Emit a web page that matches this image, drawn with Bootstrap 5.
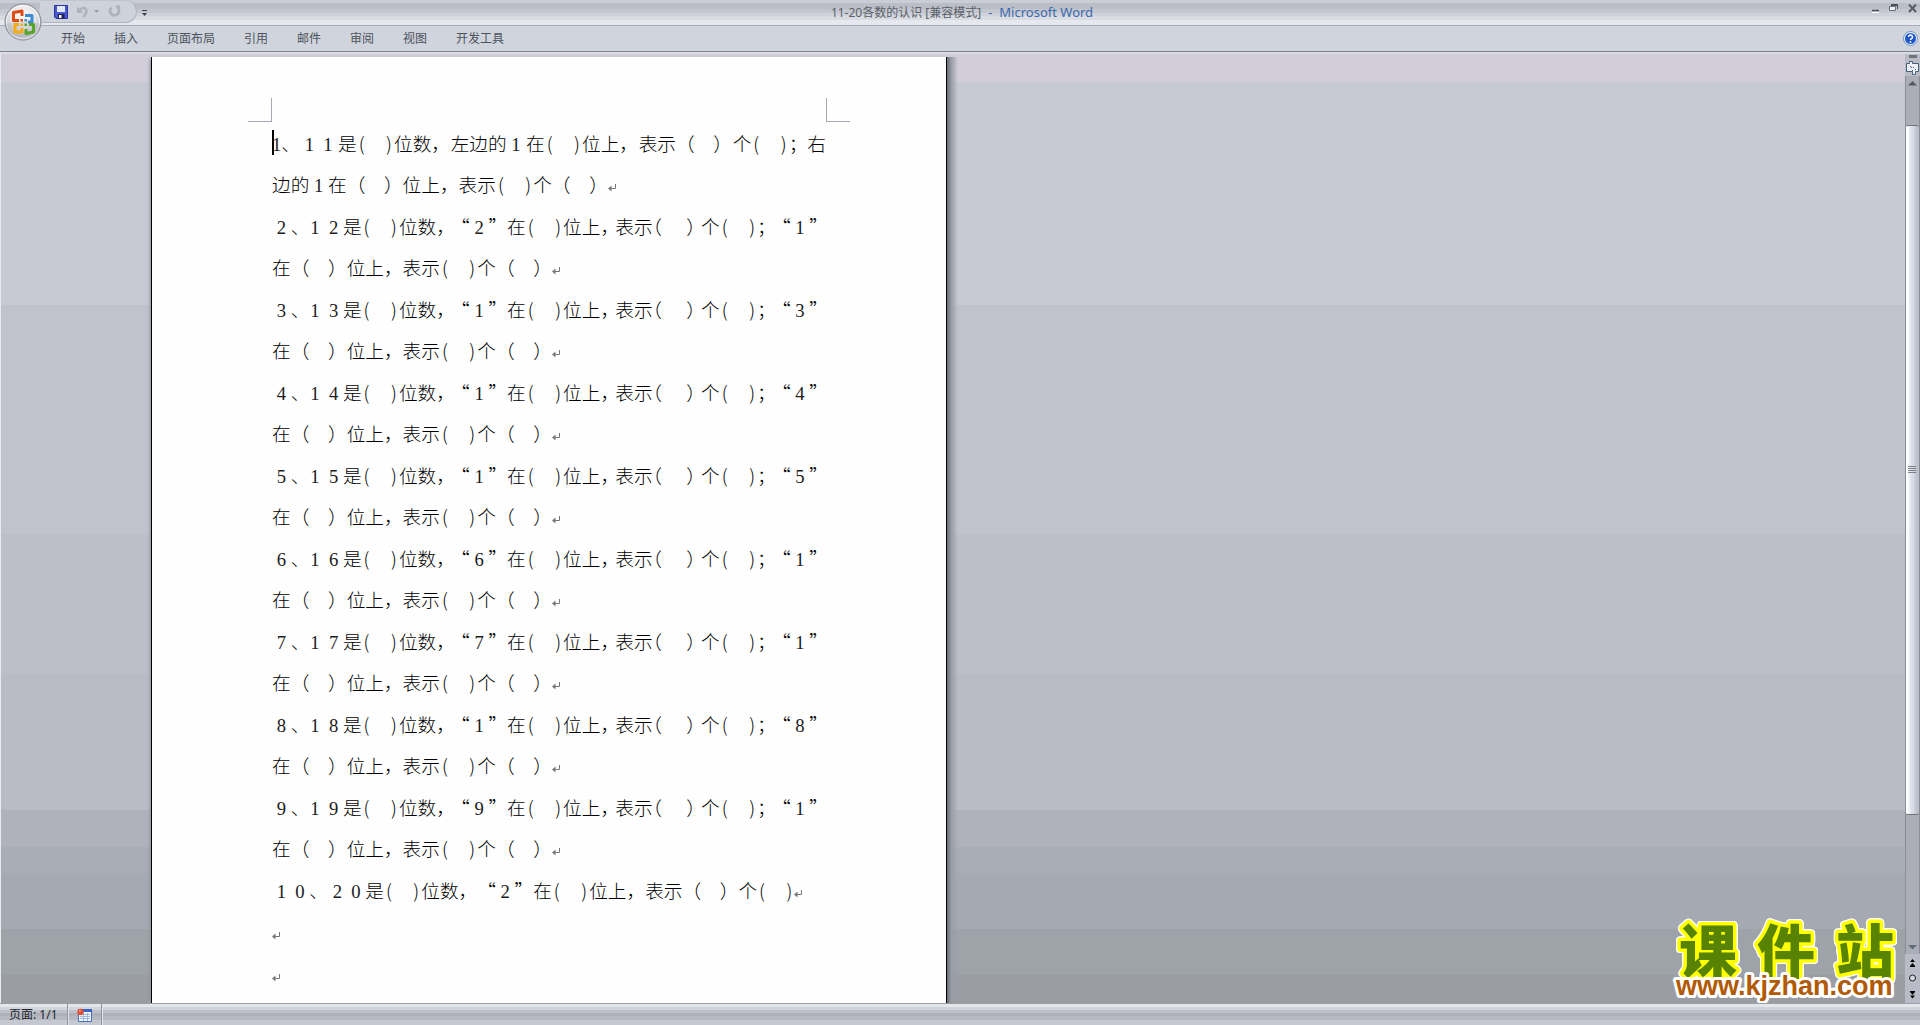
<!DOCTYPE html>
<html lang="zh-CN">
<head>
<meta charset="utf-8">
<meta name="viewport" content="width=device-width, initial-scale=1">
<title>11-20各数的认识 [兼容模式] - Microsoft Word</title>
<link href="https://cdn.jsdelivr.net/npm/bootstrap@5.3.0/dist/css/bootstrap.min.css" rel="stylesheet">
<style>
body{font-family:"Noto Sans","Noto Sans CJK SC",sans-serif;font-size:12px;line-height:16px;color:#4c535c;background:#d0d4dd;overflow:hidden}
button{border:0;background:none;padding:0;line-height:0;color:inherit}
svg{display:block}
/* title bar */
.titlebar{height:26px;border-bottom:1px solid #a9adb8;background:linear-gradient(#c9cdd6 0 3px,#bbbec7 3px 9px,#c4c7d0 9px 13px,#cfd2da 13px 16px,#dadce3 16px 20px,#e6e8ef 20px)}
.doc-title{color:#5a5f68}
.app-name{color:#3b69ad;font-size:13px}
.quick{height:23px;padding:0 15px 0 14px;margin-left:40px;border:1px solid #b1b5bf;border-top-color:#c2c5ce;border-left:0;border-radius:0 12px 12px 0;background:#ced2da}
.orb{left:4px;top:3px;z-index:3}
.win-buttons{padding:4px 3px 0 0;gap:10px}
/* ribbon tabs */
.ribbon{height:26px;border-bottom:1px solid #7d828c;background:#d0d4dd;padding:0 2px 0 61px}
.ribbon-tabs{gap:29px}
.ribbon-tabs a{color:#4c535c;text-decoration:none}
/* work area */
.workspace{min-height:0;border-top:2px solid #d9dde5;border-left:1px solid #e8eaef;background:linear-gradient(#d1cdd9 0 3%,#c7cad2 3% 26.4%,#c0c3cc 26.4% 50.6%,#bcbfc8 50.6% 65.3%,#b9bcc5 65.3% 79.7%,#afb2bb 79.7% 83.6%,#a9adb5 83.6% 86.3%,#a5a9b1 86.3% 92.2%,#9ea2a9 92.2% 97%,#9a9ea4 97%)}
.sheet{width:796px;margin:3px 0 0 150px;background:#fefefe;border:solid #000;border-width:0 1px;padding:41px 96px 0;box-shadow:-3px 0 3px -2px #8d9098}
.shade{width:11px;margin-top:3px;background:linear-gradient(90deg,#6b6d73,#9a9da5 40%,#c0c3cb00)}
.crop-mark{width:24px;height:24px;border:0 solid #a4a8b2;border-bottom-width:1px}
.crop-mark.at-left{border-right-width:1px}
.crop-mark.at-right{border-left-width:1px}
.doc-text{margin:0 24px;font-family:"Noto Sans CJK SC",sans-serif;font-weight:300;font-size:14pt;line-height:41px;color:#000;text-spacing-trim:space-all;font-kerning:none}
.doc-text p{margin:0 0 1px;white-space:nowrap}
.doc-text .ln{display:block;height:41px}
.doc-text .spread{display:flex;justify-content:space-between}
/* serif digits, full and half width */
.doc-text i{font-style:normal;font-weight:400;color:#1c1c1c;font-family:"Liberation Serif",serif;display:inline-block;width:1em;text-align:center}
.doc-text i.half{width:.5em}
/* half-width bracket pair around a blank */
.doc-text b{font-weight:300;display:inline-flex;width:2em;justify-content:space-between;padding:0 2px}
/* punctuation set tight */
.doc-text u{text-decoration:none;display:inline-block;width:.8em;font-feature-settings:"halt"}
.ret{display:inline-block;vertical-align:baseline}
.caret{left:0;top:8px;width:2px;height:25px;background:#000}
/* scroll bar */
.scroll{width:15px;background:#b9bbc6}
.split{width:8px;height:3px;margin:1px 0 2px 4px;background:#6f7278}
.track{background:#abaeb7;border-left:1px solid #8b8e96;border-right:1px solid #8b8e96}
.thumb{flex:690 1 0;border:1px solid #70737c;border-left:0;border-right:0;border-radius:2px;background:linear-gradient(90deg,#fff 0 2px,#e4e7f0 4px,#d8dbe5 7px,#bcc0ca 11px)}
.above-thumb{flex:33 1 0}
.below-thumb{flex:123 1 0}
/* status bar */
.status{height:22px;border-top:1px solid #9a9ea7;color:#22262c;background:linear-gradient(#e3e6eb 0 3px,#d0d4db 3px 6px,#bec1ca 6px 9px,#aeb1ba 9px 12px,#b6b9c2 12px 16px,#c5c8d0 16px)}
.status-cell{border-right:1px solid #8f939c;box-shadow:1px 0 #e2e4ea;padding:0 9px}
/* watermark */
.brand{right:18px;bottom:0}
.brand-cn{font:900 58px "Noto Sans CJK SC",sans-serif;fill:#588300;stroke:#ff0;stroke-width:7px;stroke-linejoin:round;paint-order:stroke;filter:drop-shadow(1px 0 #fff) drop-shadow(-1px 0 #fff) drop-shadow(0 1px #fff) drop-shadow(0 -1px #fff)}
.brand-url{font:700 27px "Liberation Sans",sans-serif;fill:#b15a05;stroke:#fff;stroke-width:6px;stroke-linejoin:round;paint-order:stroke}
</style>
<script src="https://cdn.jsdelivr.net/npm/bootstrap@5.3.0/dist/js/bootstrap.bundle.min.js"></script>
</head>
<body>
<svg width="0" height="0" class="position-absolute" aria-hidden="true">
  <symbol id="ret" viewBox="0 0 8 8"><path d="M7.500 0v4.500H2" fill="none" stroke="#777"/><path d="M0 4.500L3.500 1.500v6z" fill="#777"/></symbol>
</svg>
<div class="d-flex flex-column vh-100 position-relative">
  <button class="orb position-absolute" aria-label="Office">
    <svg width="38" height="38" viewBox="0 0 38 38">
      <defs><radialGradient id="og" cx=".5" cy=".35" r=".65"><stop offset="0" stop-color="#fff"/><stop offset=".55" stop-color="#e3e4e8"/><stop offset=".85" stop-color="#b9bbc2"/><stop offset="1" stop-color="#f4f5f7"/></radialGradient></defs>
      <circle cx="19" cy="19" r="18" fill="url(#og)" stroke="#84878f"/>
      <circle cx="19" cy="19" r="16.500" fill="none" stroke="#fff" stroke-opacity=".8"/>
      <path d="M2.500 21Q19 14 35.500 21A16.500 16.500 0 0 1 2.500 21z" fill="#a9acb4" opacity=".3"/>
      <g fill="none" stroke-width="3" stroke-linejoin="round">
        <path d="M15 17.500H9.500V9.500L18 8v5" stroke="#dd4a12"/>
        <path d="M21 12.500h7V19h-4" stroke="#3c8cd4"/>
        <path d="M15 21.500h-4V29H18v-4" stroke="#f5ac14"/>
        <path d="M25 21.500h4.500V29L22 30.500V26" stroke="#58a52c"/>
      </g>
      <rect x="16.500" y="16" width="2.500" height="2.500" fill="#dd4a12"/><rect x="20.500" y="16" width="2.500" height="2.500" fill="#3c8cd4"/><rect x="16.500" y="20.500" width="2.500" height="2.500" fill="#f5ac14"/><rect x="20.500" y="20.500" width="2.500" height="2.500" fill="#58a52c"/>
    </svg>
  </button>
  <header class="titlebar d-flex position-relative flex-shrink-0">
    <div class="quick d-flex align-items-center">
      <button aria-label="保存"><svg width="14" height="14"><path d="M.5.500h13v13H2L.5 12z" fill="#4a58cf" stroke="#2c339b"/><path d="M3 1h8v6H3z" fill="#dfe9f8"/><path d="M4 9h6.500v4.500H4z" fill="#1b1f52"/><path d="M5 10h2.500v3H5z" fill="#fff"/></svg></button>
      <button class="ms-2" aria-label="撤消"><svg width="13" height="13" viewBox="0 0 13 13"><path d="M2.500 6.500C5 2.500 10.500 1.500 10.500 6c0 2.500-1.500 4-3 6" fill="none" stroke="#aeb2bc" stroke-width="2.600"/><path d="M1 1.500V8h6.500z" fill="#aeb2bc"/></svg></button>
      <button class="ms-1" aria-label="撤消列表"><svg width="7" height="4"><path d="M1 0h5L3.500 3z" fill="#9a9ea8"/></svg></button>
      <button class="ms-2" aria-label="恢复"><svg width="13" height="13" viewBox="0 0 13 13"><path d="M3.500 2.500a4.500 4.500 0 1 0 6 0" fill="none" stroke="#aeb2bc" stroke-width="2.800"/><path d="M6.500.500H12V6z" fill="#aeb2bc"/></svg></button>
    </div>
    <button class="ms-1" aria-label="自定义快速访问工具栏"><svg width="7" height="8"><path d="M1 1.500h5" stroke="#3c4047"/><path d="M1 4h5L3.500 7z" fill="#3c4047"/></svg></button>
    <div class="doc-title position-absolute start-50 translate-middle-x text-nowrap mt-1 ps-1">11-20各数的认识 [兼容模式] <span class="app-name ms-1">-&nbsp; Microsoft Word</span></div>
    <div class="win-buttons d-flex align-items-start ms-auto">
      <button aria-label="最小化"><svg width="8" height="9"><path d="M1 6.500h7" stroke="#4a4e57" stroke-width="1.500"/><path d="M1 8.500h7" stroke="#fff"/></svg></button>
      <button aria-label="向下还原"><svg width="9" height="8"><path d="M2 .500h6.500V5" fill="none" stroke="#4a4e57"/><path d="M.5 2.500h6v4h-6z" fill="#eceff5" stroke="#68707f"/><path d="M2 1h6.500" stroke="#4a4e57" stroke-width="2"/></svg></button>
      <button aria-label="关闭"><svg width="9" height="9"><path d="M1 .500l7 7.500M8 .500L1 8" stroke="#585c66" stroke-width="2"/></svg></button>
    </div>
  </header>
  <nav class="ribbon d-flex align-items-center justify-content-between flex-shrink-0">
    <div class="ribbon-tabs d-flex">
      <a href="#">开始</a><a href="#">插入</a><a href="#">页面布局</a><a href="#">引用</a><a href="#">邮件</a><a href="#">审阅</a><a href="#">视图</a><a href="#">开发工具</a>
    </div>
    <button aria-label="帮助"><svg width="15" height="15" viewBox="0 0 15 15"><circle cx="7.500" cy="7.500" r="7" fill="#e9f1fb" stroke="#6f94c4"/><circle cx="7.500" cy="7.500" r="5.500" fill="#1f55c8"/><path d="M5.500 6a2 2 0 1 1 3 1.700q-1 .5-1 1.300" fill="none" stroke="#fff" stroke-width="1.500"/><circle cx="7.500" cy="11" r=".9" fill="#fff"/></svg></button>
  </nav>
  <div class="workspace d-flex flex-fill overflow-hidden position-relative">
    <main class="sheet flex-shrink-0" id="sheet">
      <div class="d-flex justify-content-between"><div class="crop-mark at-left"></div><div class="crop-mark at-right"></div></div>
      <div class="doc-text position-relative">
        <div class="caret position-absolute"></div>
        <p><span class="ln spread"><span><i class="half">1</i>、<i>1</i><i>1</i></span><span>是<b>(<em>&nbsp; </em>)</b>位数，</span><span>左边的<i>1</i></span><span>在<b>(<em>&nbsp; </em>)</b>位上，</span><span>表示（　）</span><span>个<b>(<em>&nbsp; </em>)</b>；右</span></span><span class="ln">边的<i>1</i>在（　）位上，表示<b>(<em>&nbsp; </em>)</b>个（　）<svg class="ret" width="8" height="8"><use href="#ret"/></svg></span></p>
        <p><span class="ln"><i>2</i><u>、</u><i>1</i><i>2</i>是<b>(<em>&nbsp; </em>)</b>位数<u>，</u>“<i>2</i>”在<b>(<em>&nbsp; </em>)</b>位上<u>，</u>表示<u>（</u>　<u>）</u>个<b>(<em>&nbsp; </em>)</b><u>；</u>“<i>1</i>”</span><span class="ln">在（　）位上，表示<b>(<em>&nbsp; </em>)</b>个（　）<svg class="ret" width="8" height="8"><use href="#ret"/></svg></span></p>
        <p><span class="ln"><i>3</i><u>、</u><i>1</i><i>3</i>是<b>(<em>&nbsp; </em>)</b>位数<u>，</u>“<i>1</i>”在<b>(<em>&nbsp; </em>)</b>位上<u>，</u>表示<u>（</u>　<u>）</u>个<b>(<em>&nbsp; </em>)</b><u>；</u>“<i>3</i>”</span><span class="ln">在（　）位上，表示<b>(<em>&nbsp; </em>)</b>个（　）<svg class="ret" width="8" height="8"><use href="#ret"/></svg></span></p>
        <p><span class="ln"><i>4</i><u>、</u><i>1</i><i>4</i>是<b>(<em>&nbsp; </em>)</b>位数<u>，</u>“<i>1</i>”在<b>(<em>&nbsp; </em>)</b>位上<u>，</u>表示<u>（</u>　<u>）</u>个<b>(<em>&nbsp; </em>)</b><u>；</u>“<i>4</i>”</span><span class="ln">在（　）位上，表示<b>(<em>&nbsp; </em>)</b>个（　）<svg class="ret" width="8" height="8"><use href="#ret"/></svg></span></p>
        <p><span class="ln"><i>5</i><u>、</u><i>1</i><i>5</i>是<b>(<em>&nbsp; </em>)</b>位数<u>，</u>“<i>1</i>”在<b>(<em>&nbsp; </em>)</b>位上<u>，</u>表示<u>（</u>　<u>）</u>个<b>(<em>&nbsp; </em>)</b><u>；</u>“<i>5</i>”</span><span class="ln">在（　）位上，表示<b>(<em>&nbsp; </em>)</b>个（　）<svg class="ret" width="8" height="8"><use href="#ret"/></svg></span></p>
        <p><span class="ln"><i>6</i><u>、</u><i>1</i><i>6</i>是<b>(<em>&nbsp; </em>)</b>位数<u>，</u>“<i>6</i>”在<b>(<em>&nbsp; </em>)</b>位上<u>，</u>表示<u>（</u>　<u>）</u>个<b>(<em>&nbsp; </em>)</b><u>；</u>“<i>1</i>”</span><span class="ln">在（　）位上，表示<b>(<em>&nbsp; </em>)</b>个（　）<svg class="ret" width="8" height="8"><use href="#ret"/></svg></span></p>
        <p><span class="ln"><i>7</i><u>、</u><i>1</i><i>7</i>是<b>(<em>&nbsp; </em>)</b>位数<u>，</u>“<i>7</i>”在<b>(<em>&nbsp; </em>)</b>位上<u>，</u>表示<u>（</u>　<u>）</u>个<b>(<em>&nbsp; </em>)</b><u>；</u>“<i>1</i>”</span><span class="ln">在（　）位上，表示<b>(<em>&nbsp; </em>)</b>个（　）<svg class="ret" width="8" height="8"><use href="#ret"/></svg></span></p>
        <p><span class="ln"><i>8</i><u>、</u><i>1</i><i>8</i>是<b>(<em>&nbsp; </em>)</b>位数<u>，</u>“<i>1</i>”在<b>(<em>&nbsp; </em>)</b>位上<u>，</u>表示<u>（</u>　<u>）</u>个<b>(<em>&nbsp; </em>)</b><u>；</u>“<i>8</i>”</span><span class="ln">在（　）位上，表示<b>(<em>&nbsp; </em>)</b>个（　）<svg class="ret" width="8" height="8"><use href="#ret"/></svg></span></p>
        <p><span class="ln"><i>9</i><u>、</u><i>1</i><i>9</i>是<b>(<em>&nbsp; </em>)</b>位数<u>，</u>“<i>9</i>”在<b>(<em>&nbsp; </em>)</b>位上<u>，</u>表示<u>（</u>　<u>）</u>个<b>(<em>&nbsp; </em>)</b><u>；</u>“<i>1</i>”</span><span class="ln">在（　）位上，表示<b>(<em>&nbsp; </em>)</b>个（　）<svg class="ret" width="8" height="8"><use href="#ret"/></svg></span></p>
        <p><span class="ln"><i>1</i><i>0</i>、<i>2</i><i>0</i>是<b>(<em>&nbsp; </em>)</b>位数，“<i>2</i>”在<b>(<em>&nbsp; </em>)</b>位上，表示（　）个<b>(<em>&nbsp; </em>)</b><svg class="ret" width="8" height="8"><use href="#ret"/></svg></span></p>
        <p><span class="ln"><svg class="ret" width="8" height="8"><use href="#ret"/></svg></span></p>
        <p><span class="ln"><svg class="ret" width="8" height="8"><use href="#ret"/></svg></span></p>
      </div>
    </main>
    <div class="shade"></div>
    <svg class="brand position-absolute" width="232" height="100" viewBox="0 0 232 100" role="img" aria-label="课件站 www.kjzhan.com">
      <text class="brand-cn" x="9 87 166" y="70">课件站</text>
      <text class="brand-url" x="6" y="92">www.kjzhan.com</text>
    </svg>
    <div class="scroll d-flex flex-column ms-auto">
      <div class="split flex-shrink-0"></div>
      <button class="flex-shrink-0" aria-label="标尺"><svg width="15" height="16"><path d="M1.500 3.500h3v-2h3v2h6v8h-3v3h-3v-3h-6z" fill="#eef1f7" stroke="#47607a"/><path d="M5 6l2 2M8 7l1 1M10 9l1 1M7 10l1 1" stroke="#47607a"/></svg></button>
      <div class="track d-flex flex-column flex-fill">
        <button aria-label="向上滚动"><svg width="13" height="16"><path d="M2 9.500h9L6.500 5z" fill="#545a64"/></svg></button>
        <div class="above-thumb"></div>
        <div class="thumb d-flex align-items-center justify-content-center" role="scrollbar" aria-label="垂直滚动条" aria-valuenow="0" aria-controls="sheet"><svg width="9" height="8"><path d="M0 .500h8M0 2.500h8M0 4.500h8M0 6.500h8" stroke="#7b7f88"/></svg></div>
        <div class="below-thumb"></div>
        <button aria-label="向下滚动"><svg width="13" height="16"><path d="M2 7h9l-4.500 4.500z" fill="#626d7b"/></svg></button>
      </div>
      <button aria-label="前一页"><svg width="15" height="16"><path d="M7.500 5L10 8H5zM7.500 9L10 12H5z" fill="#000"/><path d="M5 12.500h5" stroke="#000"/></svg></button>
      <button aria-label="选择浏览对象"><svg width="15" height="16"><circle cx="7.500" cy="8" r="3" fill="#d5d7de" stroke="#222"/></svg></button>
      <button aria-label="下一页"><svg width="15" height="17"><path d="M5 5.500h5" stroke="#000"/><path d="M5 6h5L7.500 9zM5 9.500h5l-2.500 3z" fill="#000"/></svg></button>
    </div>
  </div>
  <footer class="status d-flex flex-shrink-0">
    <div class="status-cell d-flex align-items-center">页面: 1/1</div>
    <div class="status-cell d-flex align-items-center"><button aria-label="宏录制"><svg width="15" height="14"><path d="M1.500 1.500h13v12h-13z" fill="#f3f7fd" stroke="#4a6cb8"/><path d="M1 1h14v3H1z" fill="#3b63c6"/><path d="M3 6.500h10M3 8.500h10M3 10.500h10M6.500 5v8M10.500 5v8" stroke="#9db6e2"/><circle cx="3.500" cy="4" r="3.200" fill="#dc5134"/><circle cx="2.800" cy="3" r="1" fill="#f5a48f"/></svg></button></div>
  </footer>
</div>
</body>
</html>
